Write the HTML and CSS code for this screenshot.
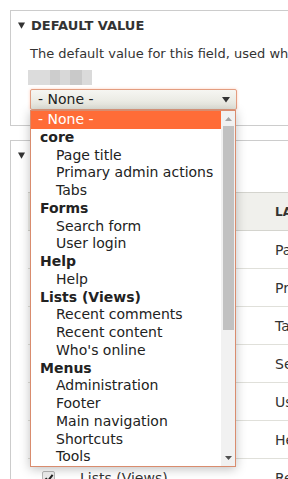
FILE: index.html
```html
<!DOCTYPE html>
<html lang="en">
<head>
    <meta charset="UTF-8">
    <meta name="viewport" content="width=device-width, initial-scale=1.0">
    <title>Default value</title>
    <link rel="stylesheet" href="styles.css">
</head>
<body>
<div class="page">
    <div class="panel">
        <div class="panel-title">
            <svg class="caret" viewBox="0 0 7 7"><path d="M0 0.5H7L3.5 6.8Z" fill="#333"/></svg>
            <span>Default value</span>
        </div>
        <div class="panel-body">
            <p class="description">The default value for this field, used when creating new content.</p>
            <div class="blurred">
                <span class="b1"></span><span class="b2"></span><span class="b3"></span><span class="b4"></span><span class="b5"></span>
            </div>
            <div class="select-wrap">
                <div class="select">
                    - None -
                    <svg class="select-arrow" viewBox="0 0 8 6"><path d="M0 0H8L4 5.6Z" fill="#333"/></svg>
                </div>
                <div class="dropdown">
                    <div class="options">
                        <div class="opt selected">- None -</div>
                        <div class="group">core</div>
                        <div class="opt child">Page title</div>
                        <div class="opt child">Primary admin actions</div>
                        <div class="opt child">Tabs</div>
                        <div class="group">Forms</div>
                        <div class="opt child">Search form</div>
                        <div class="opt child">User login</div>
                        <div class="group">Help</div>
                        <div class="opt child">Help</div>
                        <div class="group">Lists (Views)</div>
                        <div class="opt child">Recent comments</div>
                        <div class="opt child">Recent content</div>
                        <div class="opt child">Who's online</div>
                        <div class="group">Menus</div>
                        <div class="opt child">Administration</div>
                        <div class="opt child">Footer</div>
                        <div class="opt child">Main navigation</div>
                        <div class="opt child">Shortcuts</div>
                        <div class="opt child">Tools</div>
                    </div>
                    <div class="scrollbar">
                        <svg class="sb-up" viewBox="0 0 7 4"><path d="M0 4H7L3.5 0Z" fill="#a3a3a3"/></svg>
                        <div class="thumb"></div>
                        <svg class="sb-down" viewBox="0 0 7 4"><path d="M0 0H7L3.5 4Z" fill="#505050"/></svg>
                    </div>
                </div>
            </div>
        </div>
    </div>

    <div class="panel">
        <div class="panel-title">
            <svg class="caret" viewBox="0 0 7 7"><path d="M0 0.5H7L3.5 6.8Z" fill="#333"/></svg>
        </div>
        <div class="blocks">
            <div class="row head"><div class="cell"></div><div class="cell">Label</div></div>
            <div class="row"><div class="cell"></div><div class="cell">Page title</div></div>
            <div class="row"><div class="cell"></div><div class="cell">Primary admin actions</div></div>
            <div class="row"><div class="cell"></div><div class="cell">Tabs</div></div>
            <div class="row"><div class="cell"></div><div class="cell">Search form</div></div>
            <div class="row"><div class="cell"></div><div class="cell">User login</div></div>
            <div class="row"><div class="cell"></div><div class="cell">Help</div></div>
            <div class="row">
                <div class="cell">
                    <span class="check"><svg viewBox="0 0 10 10"><path d="M1.5 5.2L4 7.8L8.6 1.8" fill="none" stroke="#222" stroke-width="2"/></svg></span>
                    <span class="row-label">Lists (Views)</span>
                </div>
                <div class="cell">Recent comments</div>
            </div>
        </div>
    </div>
</div>
</body>
</html>
```

FILE: styles.css
```css
body {
    margin: 0;
    font-family: "DejaVu Sans", Verdana, sans-serif;
    color: #222;
    background-color: #fff;
    overflow: hidden;
}

.page {
    width: 600px;
    padding: 10px 0 0 10px;
}

.panel {
    border: 1px solid #ccc;
    border-right: none;
}

.panel + .panel {
    margin-top: 14px;
}

.panel-title {
    display: flex;
    align-items: flex-start;
    gap: 6px;
    height: 20px;
    padding: 5px 0 0 7px;
    font-size: 13px;
    font-weight: bold;
    line-height: 20px;
    color: #333;
    text-transform: uppercase;
}

.caret {
    width: 7px;
    height: 7px;
    margin-top: 6px;
    flex: none;
}

.panel-body {
    padding: 9px 0 15px 19px;
}

.description {
    margin: 0;
    height: 18px;
    font-size: 13px;
    line-height: 18px;
    color: #333;
    white-space: nowrap;
}

.blurred {
    display: flex;
    width: 64px;
    height: 15px;
    margin: 7px 0 0 -2px;
}

.blurred span {
    height: 100%;
}

.b1 { width: 22px; background-color: #dcdcdc; }
.b2 { width: 10px; background-color: #cdcdcd; }
.b3 { width: 10px; background-color: #d8d8d8; }
.b4 { width: 12px; background-color: #c9c9c9; }
.b5 { width: 10px; background-color: #dadada; }

.select-wrap {
    position: relative;
    width: 207px;
    margin-top: 4px;
}

.select {
    position: relative;
    height: 21px;
    box-sizing: border-box;
    padding-left: 7px;
    border: 1px solid #e39d80;
    border-radius: 2px;
    background: linear-gradient(#f6f6f2, #e3e3da);
    box-shadow: 0 0 3px rgba(255, 110, 54, 0.35);
    font-size: 14px;
    line-height: 19px;
    color: #222;
}

.select-arrow {
    position: absolute;
    top: 7px;
    right: 6px;
    width: 8px;
    height: 6px;
}

.dropdown {
    position: absolute;
    top: 21px;
    left: 0;
    z-index: 2;
    display: flex;
    width: 206px;
    box-sizing: border-box;
    border: 1px solid #d98c6e;
    background-color: #fff;
    box-shadow: 0 2px 10px rgba(0, 0, 0, 0.25);
}

.options {
    flex: 1;
}

.opt,
.group {
    height: 17.75px;
    padding-left: 7px;
    font-size: 14px;
    line-height: 17.75px;
    color: #222;
    white-space: nowrap;
}

.group {
    padding-left: 9px;
    font-weight: bold;
}

.opt.child {
    padding-left: 25px;
}

.opt.selected {
    background-color: #ff6c37;
    color: #fff;
}

.scrollbar {
    position: relative;
    width: 14px;
    background-color: #f1f1f1;
}

.thumb {
    position: absolute;
    top: 15px;
    left: 2px;
    width: 11px;
    height: 204px;
    background-color: #c1c1c1;
}

.sb-up,
.sb-down {
    position: absolute;
    left: 4px;
    width: 7px;
    height: 4px;
}

.sb-up {
    top: 6px;
}

.sb-down {
    bottom: 6px;
}

.blocks {
    width: 560px;
    margin: 26px 0 0 17px;
}

.row {
    display: grid;
    grid-template-columns: 236px 1fr;
    align-items: center;
    height: 38px;
    box-sizing: border-box;
    border-bottom: 1px solid #e0e0da;
    font-size: 14px;
    color: #333;
}

.row.head {
    height: 39px;
    border-top: 1px solid #d4d4ce;
    border-bottom-color: #d4d4ce;
    background-color: #f0f0ec;
    font-size: 12px;
    font-weight: bold;
    text-transform: uppercase;
}

.cell {
    display: flex;
    align-items: center;
    padding-left: 14px;
    white-space: nowrap;
}

.cell + .cell {
    padding-left: 11px;
}

.check {
    display: flex;
    align-items: center;
    justify-content: center;
    width: 11px;
    height: 11px;
    margin-right: 25px;
    border: 1px solid #b8b8b8;
    border-radius: 2px;
    background: linear-gradient(#f4f4f4, #dedede);
}

.check svg {
    width: 10px;
    height: 10px;
}
```
